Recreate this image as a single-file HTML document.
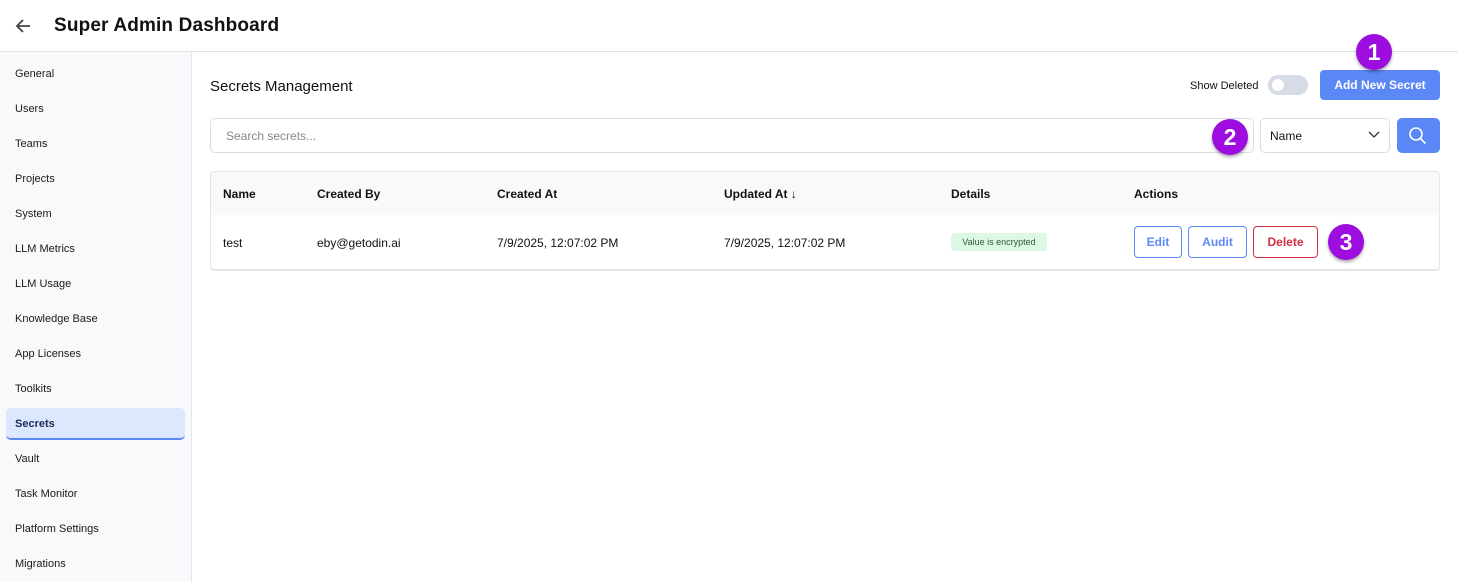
<!DOCTYPE html><html><head><style>
*{box-sizing:border-box;margin:0;padding:0}
body{width:1458px;height:582px;overflow:hidden;font-family:"Liberation Sans",sans-serif;background:#fff;color:#111;position:relative}
.abs{position:absolute}
.hdr{left:0;top:0;width:1458px;height:52px;border-bottom:1px solid #dde1e8}
.side{left:0;top:52px;width:192px;height:530px;background:#f8f9fb;border-right:1px solid #e3e6ec}
.si{position:absolute;left:15px;font-size:11px;color:#1a1a1a}
.sel{left:6px;top:408px;width:179px;height:32px;background:#dce8fd;border-radius:5px;border-bottom:2px solid #5b87f7}
.badge{width:36px;height:36px;border-radius:50%;background:#9d0de0;color:#fff;font-size:23px;font-weight:bold;text-align:center;line-height:36px;box-shadow:0 2px 3px rgba(0,0,0,.35)}
.th{position:absolute;top:187px;font-size:12px;font-weight:bold}
.td{position:absolute;top:236px;font-size:12px}
.btn{position:absolute;top:226px;height:32px;border:1px solid #5b87f7;border-radius:4px;color:#5b87f7;font-size:12px;font-weight:bold;text-align:center;line-height:30px}
</style></head><body>
<div class="abs hdr"></div>
<svg class="abs" style="left:14px;top:17px" width="18" height="18" viewBox="0 0 18 18"><path d="M16 9H3M9 3L3 9l6 6" stroke="#444" stroke-width="1.8" fill="none"/></svg>
<div class="abs" style="left:54px;top:15px;font-size:19px;font-weight:bold;letter-spacing:0.15px">Super Admin Dashboard</div>
<div class="abs side"></div>
<div class="abs sel"></div>
<div class="si" style="top:68px">General</div><div class="si" style="top:103px">Users</div><div class="si" style="top:138px">Teams</div><div class="si" style="top:173px">Projects</div><div class="si" style="top:208px">System</div><div class="si" style="top:243px">LLM Metrics</div><div class="si" style="top:278px">LLM Usage</div><div class="si" style="top:313px">Knowledge Base</div><div class="si" style="top:348px">App Licenses</div><div class="si" style="top:383px">Toolkits</div><div class="si" style="top:418px;font-weight:bold;color:#1e2a5a">Secrets</div><div class="si" style="top:453px">Vault</div><div class="si" style="top:488px">Task Monitor</div><div class="si" style="top:523px">Platform Settings</div><div class="si" style="top:558px">Migrations</div>
<div class="abs" style="left:210px;top:78px;font-size:15px">Secrets Management</div>
<div class="abs" style="left:1190px;top:80px;font-size:11px">Show Deleted</div>
<div class="abs" style="left:1268px;top:75px;width:40px;height:20px;border-radius:10px;background:#d6dce6"><div class="abs" style="left:4px;top:4px;width:12px;height:12px;border-radius:50%;background:#fff"></div></div>
<div class="abs" style="left:1320px;top:70px;width:120px;height:30px;border-radius:4px;background:#5b87f7;color:#fff;font-size:12px;font-weight:bold;text-align:center;line-height:30px">Add New Secret</div>
<div class="abs badge" style="left:1356px;top:34px">1</div>
<div class="abs" style="left:210px;top:118px;width:1044px;height:35px;border:1px solid #d9dde5;border-radius:5px;font-size:12px;color:#888;padding:10px 15px">Search secrets...</div>
<div class="abs badge" style="left:1212px;top:119px">2</div>
<div class="abs" style="left:1260px;top:118px;width:130px;height:35px;border:1px solid #d9dde5;border-radius:5px;font-size:12px;padding:10px 9px">Name</div>
<svg class="abs" style="left:1368px;top:131px" width="12" height="8"><path d="M1 1l5 5 5-5" stroke="#333" stroke-width="1.3" fill="none"/></svg>
<div class="abs" style="left:1397px;top:118px;width:43px;height:35px;border-radius:5px;background:#5b87f7"></div>
<svg class="abs" style="left:1408px;top:126px" width="20" height="20"><circle cx="8" cy="8" r="6" stroke="#fff" stroke-width="1.6" fill="none"/><path d="M12.5 12.5l5 5" stroke="#fff" stroke-width="1.6"/></svg>
<div class="abs" style="left:210px;top:171px;width:1230px;height:100px;border:1px solid #e2e5ea;border-bottom:2px solid #e2e5ea;border-radius:4px;overflow:hidden"><div style="height:43px;background:#f8f9fb"></div></div>
<div class="th" style="left:223px">Name</div><div class="th" style="left:317px">Created By</div><div class="th" style="left:497px">Created At</div><div class="th" style="left:724px">Updated At ↓</div><div class="th" style="left:951px">Details</div><div class="th" style="left:1134px">Actions</div>
<div class="td" style="left:223px">test</div><div class="td" style="left:317px">eby@getodin.ai</div><div class="td" style="left:497px">7/9/2025, 12:07:02 PM</div><div class="td" style="left:724px">7/9/2025, 12:07:02 PM</div>
<div class="abs" style="left:951px;top:233px;width:96px;height:18px;background:#dcf7e3;border-radius:3px;font-size:9px;color:#2f5d3a;text-align:center;line-height:18px">Value is encrypted</div>
<div class="btn" style="left:1134px;width:48px">Edit</div><div class="btn" style="left:1188px;width:59px">Audit</div><div class="btn" style="left:1253px;width:65px;border-color:#d0303f;color:#d0303f">Delete</div>
<div class="abs badge" style="left:1328px;top:224px">3</div>
</body></html>
